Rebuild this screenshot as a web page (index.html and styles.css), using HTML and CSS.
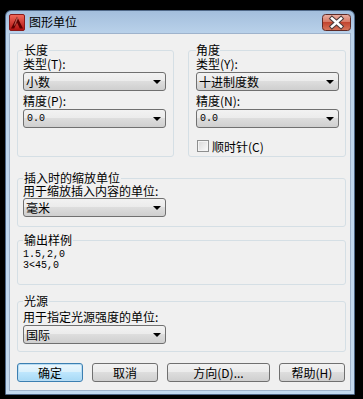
FILE: index.html
```html
<!DOCTYPE html>
<html lang="zh-CN">
<head>
  <meta charset="UTF-8" />
  <meta name="viewport" content="width=device-width, initial-scale=1.0"/>
  <title>图形单位</title>
  <link rel="stylesheet" href="styles.css">
</head>
<body>
  <div class="window">
    <div class="titlebar">
      <svg class="app-icon" width="16" height="17" viewBox="0 0 16 17">
        <defs>
          <linearGradient id="iconBg" x1="0" y1="0" x2="0" y2="1">
            <stop offset="0" stop-color="#f26b5c"/>
            <stop offset="1" stop-color="#b01010"/>
          </linearGradient>
        </defs>
        <rect x="0.5" y="0.5" width="15" height="16" rx="1.5" fill="url(#iconBg)" stroke="#8a1a1a"/>
        <polygon points="8,2.5 14,14.5 10.8,14.5 8,8.5 5.2,14.5 2,14.5" fill="#5c0000"/>
        <polygon points="8,2.5 9,4.6 6,11.5 5,11.5" fill="#ff9a8a" opacity="0.6"/>
      </svg>
      <span class="title">图形单位</span>
      <button class="close" type="button">
        <svg width="29" height="17" viewBox="0 0 29 17">
          <defs>
            <linearGradient id="closeBg" x1="0" y1="0" x2="0" y2="1">
              <stop offset="0" stop-color="#eab1a4"/>
              <stop offset="0.45" stop-color="#d77a66"/>
              <stop offset="0.5" stop-color="#c2452f"/>
              <stop offset="1" stop-color="#d8775c"/>
            </linearGradient>
          </defs>
          <rect x="0.5" y="0.5" width="28" height="16" rx="3" fill="url(#closeBg)" stroke="#5f2a26"/>
          <path d="M10 4.5 L19 12.5 M19 4.5 L10 12.5" stroke="#4a3a3a" stroke-width="4.6" stroke-linecap="square"/>
          <path d="M10 4.5 L19 12.5 M19 4.5 L10 12.5" stroke="#ffffff" stroke-width="2.6" stroke-linecap="square"/>
        </svg>
      </button>
    </div>

    <div class="client">
      <div class="row">
        <fieldset class="group length">
          <legend>长度</legend>
          <div class="label">类型(T):</div>
          <div class="combo"><span>小数</span><span class="arrow"></span></div>
          <div class="label second">精度(P):</div>
          <div class="combo"><span class="num">0.0</span><span class="arrow"></span></div>
        </fieldset>

        <fieldset class="group angle">
          <legend>角度</legend>
          <div class="label">类型(Y):</div>
          <div class="combo"><span>十进制度数</span><span class="arrow"></span></div>
          <div class="label second">精度(N):</div>
          <div class="combo"><span class="num">0.0</span><span class="arrow"></span></div>
          <div class="check"><span class="box"></span><span>顺时针(C)</span></div>
        </fieldset>
      </div>

      <fieldset class="group insert">
        <legend>插入时的缩放单位</legend>
        <div class="label">用于缩放插入内容的单位:</div>
        <div class="combo"><span>毫米</span><span class="arrow"></span></div>
      </fieldset>

      <fieldset class="group sample">
        <legend>输出样例</legend>
        <div class="sample-text">1.5,2,0</div>
        <div class="sample-text">3&lt;45,0</div>
      </fieldset>

      <fieldset class="group light">
        <legend>光源</legend>
        <div class="label">用于指定光源强度的单位:</div>
        <div class="combo"><span>国际</span><span class="arrow"></span></div>
      </fieldset>

      <div class="buttons">
        <button class="btn default" type="button">确定</button>
        <button class="btn" type="button">取消</button>
        <button class="btn wide" type="button">方向(D)...</button>
        <button class="btn" type="button">帮助(H)</button>
      </div>
    </div>
  </div>
</body>
</html>
```

FILE: styles.css
```css
body {
  margin: 0;
  background: #000000;
  font-family: "Noto Sans CJK SC", "Liberation Sans", sans-serif;
  font-size: 12px;
  color: #000000;
}

.window {
  margin: 10px 0 0 5px;
  width: 350px;
  height: 385px;
  box-sizing: border-box;
  display: flex;
  flex-direction: column;
  padding: 0 3px 3px;
  border: 1px solid #4f6888;
  border-radius: 6px 6px 0 0;
  background: linear-gradient(#a3bedc, #bbd3eb 24px, #c3d9ef);
}

.titlebar {
  height: 22px;
  display: flex;
  align-items: center;
  flex-shrink: 0;
}
.app-icon { display: block; margin-right: 4px; }
.title { line-height: 14px; }
.close {
  margin-left: auto;
  padding: 0;
  border: none;
  background: none;
  display: block;
  height: 17px;
}
.close svg { display: block; }

.client {
  flex: 1;
  box-sizing: border-box;
  background: #f0f0f0;
  border: 1px solid #9fb3cc;
  padding: 9px 0 0 7px;
}

.row {
  display: flex;
  gap: 14px;
  width: 329px;
}

.group {
  margin: 0;
  min-width: 0;
  box-sizing: border-box;
  border: 1px solid #d5dfe5;
  border-radius: 3px;
  padding: 0 5px;
}
.group legend {
  padding: 0 1px;
  line-height: 14px;
}

.length { width: 157px; }
.angle { width: 158px; padding: 0 7px 3px; }
.angle legend { padding: 0; }

.label { line-height: 13px; white-space: nowrap; }
.label.second { margin-top: 3px; }

.combo {
  width: 143px;
  height: 19px;
  box-sizing: border-box;
  margin-top: 2px;
  padding: 0 4px 0 2px;
  display: flex;
  align-items: center;
  justify-content: space-between;
  border: 1px solid #707070;
  border-radius: 3px;
  background: linear-gradient(#f2f2f2 0%, #ebebeb 50%, #dddddd 50%, #cfcfcf 100%);
  line-height: 17px;
}
.combo .num {
  font-family: "Liberation Mono", monospace;
  font-size: 10px;
  padding-left: 1px;
}
.arrow {
  width: 0;
  height: 0;
  border-left: 4px solid transparent;
  border-right: 4px solid transparent;
  border-top: 4px solid #000000;
}

.check {
  margin-top: 11px;
  height: 14px;
  display: flex;
  align-items: center;
  gap: 3px;
  padding-left: 1px;
}
.check .box {
  width: 12px;
  height: 12px;
  box-sizing: border-box;
  border: 1px solid #8e8f8f;
  background: linear-gradient(135deg, #d8d8d8, #fbfbfb);
  box-shadow: inset 0 0 0 1px #f4f4f4;
}

.insert, .sample, .light { width: 329px; }

.insert { margin-top: 14px; padding-bottom: 9px; }
.insert .label { margin-top: -1px; }
.insert .combo { margin-top: 1px; }

.sample { margin-top: 6px; padding-bottom: 13px; }
.sample-text {
  font-family: "Liberation Mono", monospace;
  font-size: 10px;
  line-height: 11px;
}
.sample-text:first-of-type { margin-top: 2px; }

.light { margin-top: 9px; padding-bottom: 7px; }
.light .label { margin-top: 2px; }

.buttons {
  margin-top: 11px;
  width: 328px;
  display: flex;
  gap: 9px;
}
.btn {
  width: 66px;
  height: 19px;
  box-sizing: border-box;
  padding: 0;
  font: inherit;
  line-height: 17px;
  color: #000000;
  border: 1px solid #707070;
  border-radius: 3px;
  background: linear-gradient(#f2f2f2 0%, #ebebeb 50%, #dddddd 50%, #cfcfcf 100%);
}
.btn.wide { width: 103px; }
.btn.default {
  border-color: #3c7fb1;
  background: linear-gradient(#eaf6fd 0%, #d9f0fc 50%, #bee6fd 50%, #a7d9f5 100%);
  box-shadow: inset 0 0 0 1px #b8dcf3;
}
```
